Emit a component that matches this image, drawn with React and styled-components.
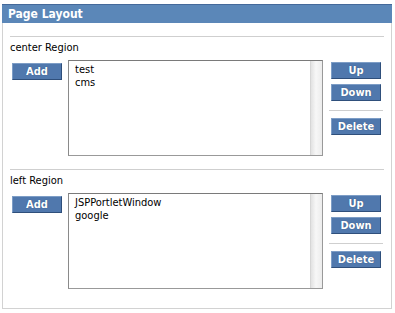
import React from "react";
import styled, { createGlobalStyle } from "styled-components";

const Global = createGlobalStyle`
  body {
    margin: 0;
    background: #fff;
    font-family: "DejaVu Sans Condensed", "DejaVu Sans", sans-serif;
    font-size: 11px;
    color: #000;
  }
`;

const regions = [
  { name: "center", items: ["test", "cms"] },
  { name: "left", items: ["JSPPortletWindow", "google"] },
];

const Button = ({ children }) => <Btn type="button">{children}</Btn>;

const Region = ({ name, items }) => (
  <Section>
    <Label>{name} Region</Label>
    <Row>
      <AddCol>
        <Button>Add</Button>
      </AddCol>
      <List>
        <Items>
          {items.map((item) => (
            <div key={item}>{item}</div>
          ))}
        </Items>
        <Track />
      </List>
      <Actions>
        <Button>Up</Button>
        <Button>Down</Button>
        <Rule />
        <Button>Delete</Button>
      </Actions>
    </Row>
  </Section>
);

export default () => (
  <>
    <Global />
    <Panel>
      <Header>Page Layout</Header>
      <Body>
        {regions.map((r) => (
          <Region key={r.name} {...r} />
        ))}
      </Body>
    </Panel>
  </>
);

const Panel = styled.div`
  margin: 4px 0 0 2px;
  width: 390px;
  box-sizing: border-box;
  border: 1px solid #d2d2d2;
  border-top: none;
`;

const Header = styled.div`
  height: 18px;
  margin: 0 -1px;
  padding-left: 6px;
  background: #5b87b8;
  border-top: 1px solid #44699a;
  color: #fff;
  font-weight: bold;
  font-size: 12px;
  line-height: 18px;
`;

const Body = styled.div`
  padding: 13px 7px 6px 7px;
`;

const Section = styled.div`
  border-top: 1px solid #cfcfcf;
  padding: 4px 0 13px;
`;

const Label = styled.div`
  line-height: 14px;
  margin-bottom: 5px;
`;

const Row = styled.div`
  display: flex;
  align-items: flex-start;
`;

const AddCol = styled.div`
  width: 58px;
  padding: 3px 0 0 2px;
  box-sizing: border-box;
`;

const List = styled.div`
  width: 255px;
  height: 96px;
  box-sizing: border-box;
  border: 1px solid #999;
  border-top-color: #7a7a7a;
  border-left-color: #8a8a8a;
  display: flex;
  background: #fff;
`;

const Items = styled.div`
  flex: 1;
  padding: 2px 6px;
  line-height: 13px;
`;

const Track = styled.div`
  width: 11px;
  border-left: 1px solid #d6d6d6;
  background: linear-gradient(to right, #e2e2e2, #f7f7f7 45%, #ececec);
`;

const Actions = styled.div`
  width: 54px;
  margin-left: 6px;
  padding-top: 2px;
  display: flex;
  flex-direction: column;
  align-items: center;
  gap: 5px;
`;

const Rule = styled.div`
  align-self: stretch;
  height: 1px;
  background: #cfcfcf;
  margin: 4px 0 2px;
`;

const Btn = styled.button`
  width: 50px;
  height: 17px;
  padding: 0;
  box-sizing: border-box;
  background: #5078ad;
  border: 1px solid;
  border-color: #7d9dc6 #2f4f7b #2f4f7b #7d9dc6;
  color: #fff;
  font-family: "DejaVu Sans Condensed", "DejaVu Sans", sans-serif;
  font-size: 11px;
  font-weight: bold;
  line-height: 15px;
  text-shadow: 0 0 1px #2c4a72;
  cursor: pointer;
`;
